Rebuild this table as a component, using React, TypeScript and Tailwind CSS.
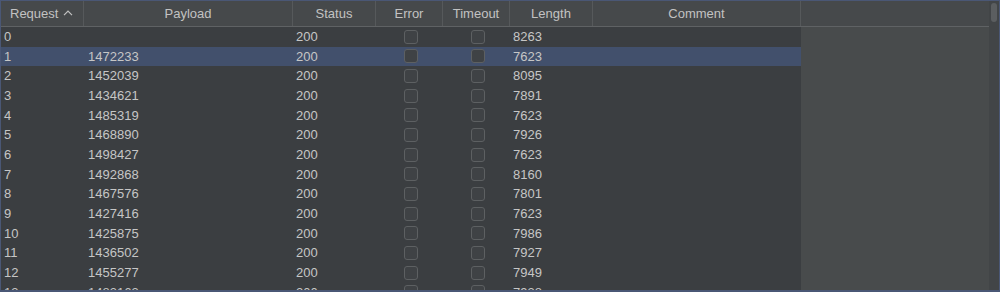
import React from "react";

type Row = { id: number; payload: string; status: string; length: string };

const rows: Row[] = [
  { id: 0, payload: "", status: "200", length: "8263" },
  { id: 1, payload: "1472233", status: "200", length: "7623" },
  { id: 2, payload: "1452039", status: "200", length: "8095" },
  { id: 3, payload: "1434621", status: "200", length: "7891" },
  { id: 4, payload: "1485319", status: "200", length: "7623" },
  { id: 5, payload: "1468890", status: "200", length: "7926" },
  { id: 6, payload: "1498427", status: "200", length: "7623" },
  { id: 7, payload: "1492868", status: "200", length: "8160" },
  { id: 8, payload: "1467576", status: "200", length: "7801" },
  { id: 9, payload: "1427416", status: "200", length: "7623" },
  { id: 10, payload: "1425875", status: "200", length: "7986" },
  { id: 11, payload: "1436502", status: "200", length: "7927" },
  { id: 12, payload: "1455277", status: "200", length: "7949" },
  { id: 13, payload: "1483163", status: "200", length: "7938" },
];

const SELECTED = 1;

function Checkbox() {
  return (
    <span className="block h-[14px] w-[14px] rounded-[3px] border border-[#5d6062] bg-[#3f4245]" />
  );
}

function HeaderCell({
  width,
  children,
}: {
  width: string;
  children: React.ReactNode;
}) {
  return (
    <div
      className={`${width} flex h-full shrink-0 items-center justify-center border-r border-[#56595b]`}
    >
      {children}
    </div>
  );
}

export default function App() {
  return (
    <div
      className="flex h-[292px] w-[1000px] overflow-hidden border-x border-t border-b-2 border-[#4a5775] bg-[#484b4c] text-[13px] text-[#c6c6c6]"
      style={{ fontFamily: '"Liberation Sans", Arial, sans-serif' }}
    >
      <div className="flex min-w-0 flex-1 flex-col">
        {/* column headers */}
        <div className="flex h-[26px] shrink-0 border-b border-[#5f6264] bg-[#46494b] text-[#c2c2c2]">
          <div className="flex h-full w-[83px] shrink-0 items-center border-r border-[#56595b] pl-[9px]">
            <span>Request</span>
            <svg
              width="10"
              height="6"
              viewBox="0 0 10 6"
              className="ml-[5px] mb-[2px]"
              fill="none"
              stroke="#c2c2c2"
              strokeWidth="1.2"
            >
              <path d="M1 5.2 L5 1.2 L9 5.2" />
            </svg>
          </div>
          <HeaderCell width="w-[209px]">Payload</HeaderCell>
          <HeaderCell width="w-[83px]">Status</HeaderCell>
          <HeaderCell width="w-[67px]">Error</HeaderCell>
          <HeaderCell width="w-[67px]">Timeout</HeaderCell>
          <HeaderCell width="w-[83px]">Length</HeaderCell>
          <HeaderCell width="w-[208px]">Comment</HeaderCell>
          <div className="flex-1" />
        </div>

        {/* result rows */}
        <div className="flex min-h-0 flex-1">
          <div className="w-[800px] shrink-0 overflow-hidden bg-[#3b3e41]">
            {rows.map((r) => (
              <div
                key={r.id}
                className={`flex h-[19.67px] items-center ${
                  r.id === SELECTED ? "bg-[#42506c]" : ""
                }`}
              >
                <div className="w-[83px] shrink-0 pl-[3px]">{r.id}</div>
                <div className="w-[209px] shrink-0 pl-[4px]">{r.payload}</div>
                <div className="w-[83px] shrink-0 pl-[3px]">{r.status}</div>
                <div className="flex w-[67px] shrink-0 justify-center pl-[3px]">
                  <Checkbox />
                </div>
                <div className="flex w-[67px] shrink-0 justify-center pl-[3px]">
                  <Checkbox />
                </div>
                <div className="w-[83px] shrink-0 pl-[3px]">{r.length}</div>
                <div className="w-[208px] shrink-0" />
              </div>
            ))}
          </div>
          <div className="flex-1 bg-[#484b4c]" />
        </div>
      </div>

      {/* vertical scrollbar */}
      <div className="w-[10px] shrink-0 bg-[#424547] px-[2px] pt-[2px]">
        <div className="h-[19px] w-[6px] rounded-full bg-[#5b5e60]" />
      </div>
    </div>
  );
}
